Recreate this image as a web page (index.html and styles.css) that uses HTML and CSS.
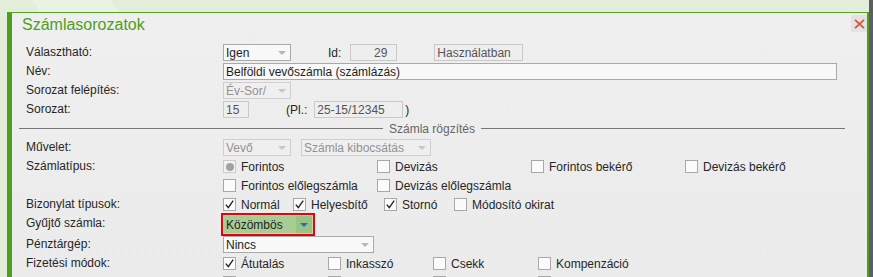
FILE: index.html
```html
<!DOCTYPE html>
<html lang="hu">
<head>
<meta charset="utf-8">
<title>Számlasorozatok</title>
<link rel="stylesheet" href="styles.css">
</head>
<body>
<div class="screen">
  <div class="stage">
    <div class="dialog">
      <div class="head">
        <h1 class="title">Számlasorozatok</h1>
        <button class="close" type="button" aria-label="Bezárás">
          <svg width="11" height="10" viewBox="0 0 11 10"><path d="M1 0.8 L10 9.2 M10 0.8 L1 9.2" stroke="#e0502f" stroke-width="1.8" fill="none"/></svg>
        </button>
      </div>
      <div class="form">
        <div class="label">Választható:</div>
        <div class="ctrl">
          <span class="sel w68">Igen<i class="arr"></i></span>
          <span class="txt ml37">Id:</span>
          <span class="field ro num w47 ml9">29</span>
          <span class="field ro w89 ml37">Használatban</span>
        </div>

        <div class="label">Név:</div>
        <div class="ctrl"><span class="field edit w614">Belföldi vevőszámla (számlázás)</span></div>

        <div class="label">Sorozat felépítés:</div>
        <div class="ctrl"><span class="sel dis w68">Év-Sor/<i class="arr"></i></span></div>

        <div class="label">Sorozat:</div>
        <div class="ctrl">
          <span class="field ro w26">15</span>
          <span class="txt ml37">(Pl.:</span>
          <span class="field ro w89 ml7">25-15/12345</span>
          <span class="txt ml2">)</span>
        </div>

        <div class="sep"><span>Számla rögzítés</span></div>

        <div class="label">Művelet:</div>
        <div class="ctrl">
          <span class="sel dis w68">Vevő<i class="arr"></i></span>
          <span class="sel dis w130 ml10">Számla kibocsátás<i class="arr"></i></span>
        </div>

        <div class="label">Számlatípus:</div>
        <div class="ctrl cols154">
          <span class="opt"><span class="rb"><i></i></span>Forintos</span>
          <span class="opt"><span class="cb"></span>Devizás</span>
          <span class="opt"><span class="cb"></span>Forintos bekérő</span>
          <span class="opt"><span class="cb"></span>Devizás bekérő</span>
        </div>

        <div class="label"></div>
        <div class="ctrl cols154">
          <span class="opt"><span class="cb"></span>Forintos előlegszámla</span>
          <span class="opt"><span class="cb"></span>Devizás előlegszámla</span>
        </div>

        <div class="label">Bizonylat típusok:</div>
        <div class="ctrl">
          <span class="opt w70"><span class="cb"><svg viewBox="0 0 11 11"><polyline points="1.8,5.6 4.3,8.6 9.2,1.6"/></svg></span>Normál</span>
          <span class="opt w91"><span class="cb"><svg viewBox="0 0 11 11"><polyline points="1.8,5.6 4.3,8.6 9.2,1.6"/></svg></span>Helyesbítő</span>
          <span class="opt w70"><span class="cb"><svg viewBox="0 0 11 11"><polyline points="1.8,5.6 4.3,8.6 9.2,1.6"/></svg></span>Stornó</span>
          <span class="opt"><span class="cb"></span>Módosító okirat</span>
        </div>

        <div class="label">Gyűjtő számla:</div>
        <div class="ctrl">
          <span class="gsel">Közömbös<span class="gbtn"><i></i></span></span>
        </div>

        <div class="label">Pénztárgép:</div>
        <div class="ctrl"><span class="sel w151">Nincs<i class="arr"></i></span></div>

        <div class="label">Fizetési módok:</div>
        <div class="ctrl cols105">
          <span class="opt"><span class="cb"><svg viewBox="0 0 11 11"><polyline points="1.8,5.6 4.3,8.6 9.2,1.6"/></svg></span>Átutalás</span>
          <span class="opt"><span class="cb"></span>Inkasszó</span>
          <span class="opt"><span class="cb"></span>Csekk</span>
          <span class="opt"><span class="cb"></span>Kompenzáció</span>
        </div>

        <div class="label"></div>
        <div class="ctrl cols105">
          <span class="opt"><span class="cb"></span>Készpénz</span>
          <span class="opt"><span class="cb"></span>Kártyás</span>
          <span class="opt"><span class="cb"></span>Utalvány</span>
          <span class="opt"><span class="cb"></span>Utánvét</span>
        </div>
      </div>
    </div>
  </div>
  <div class="scrollbar"></div>
</div>
</body>
</html>
```

FILE: styles.css
```css
* { box-sizing: border-box; }
html, body { margin: 0; padding: 0; }
body {
  width: 873px;
  height: 277px;
  overflow: hidden;
  font-family: "Liberation Sans", Arial, sans-serif;
  font-size: 12px;
  color: #262626;
  background: linear-gradient(56deg, #e2eed9 181px, #e9f3e3 182px, #e9f3e3 246px, #e2eed9 247px);
}
.screen { display: flex; height: 277px; }
.stage { flex: 1; padding: 12px 0 0 7px; }
.scrollbar { width: 4px; background: #5e5e5e; }

.dialog {
  height: 100%;
  background: linear-gradient(#efefef, #ebebeb);
  border-left: 5px solid #4e9f1f;
  border-top: 1px solid #56a626;
  border-right: 2px solid #4e9f1f;
}
.head {
  display: flex;
  justify-content: space-between;
  align-items: flex-start;
  height: 30px;
  padding-left: 10px;
}
.title {
  margin: 3px 0 0;
  font-weight: normal;
  font-size: 16px;
  line-height: 18px;
  color: #4f9e1c;
}
.close {
  margin-top: 2px;
  width: 16px;
  height: 17px;
  padding: 0;
  border: 0;
  background: #e2e2e2;
  display: flex;
  align-items: center;
  justify-content: center;
}

.form {
  display: grid;
  grid-template-columns: 204px 1fr;
  grid-template-rows: repeat(9, 19px) 21px repeat(3, 19px);
  padding-left: 7px;
}
.label {
  padding-left: 7px;
  line-height: 19px;
  white-space: nowrap;
}
.ctrl {
  display: flex;
  align-items: center;
  white-space: nowrap;
}

.ml2 { margin-left: 2px; }
.ml7 { margin-left: 7px; }
.ml9 { margin-left: 9px; }
.ml10 { margin-left: 10px; }
.ml37 { margin-left: 37px; }
.w26 { width: 26px; }
.w47 { width: 47px; }
.w68 { width: 68px; }
.w89 { width: 89px; }
.w130 { width: 130px; }
.w151 { width: 151px; }
.w614 { width: 614px; }
.w70 { width: 70px; }
.w91 { width: 91px; }

.field, .sel {
  display: inline-flex;
  align-items: center;
  height: 17px;
  padding: 0 2px;
  border: 1px solid #a9a9a9;
  background: #f8f8f8;
  color: #1e1e1e;
  flex: none;
}
.field.ro {
  border-color: #c9c9c9;
  background: #eeeeee;
  color: #555;
}
.field.num { justify-content: flex-end; padding-right: 9px; }
.sel.dis {
  border-color: #cfcfcf;
  background: #efefef;
  color: #929292;
}
.arr {
  margin-left: auto;
  margin-right: 2px;
  width: 0;
  height: 0;
  border-left: 4px solid transparent;
  border-right: 4px solid transparent;
  border-top: 4px solid #b6b6b6;
}
.sel.dis .arr { border-top-color: #c8c8c8; }

.sep {
  grid-column: 1 / -1;
  display: flex;
  align-items: center;
  gap: 6px;
  margin-right: 22px;
  color: #666;
}
.sep::before, .sep::after {
  content: "";
  flex: 1;
  height: 1px;
  background: #777;
}

.cols154 { display: grid; grid-template-columns: repeat(4, 154px); }
.cols105 { display: grid; grid-template-columns: repeat(4, 105px); }
.opt {
  display: inline-flex;
  align-items: center;
  flex: none;
}
.cb, .rb {
  width: 13px;
  height: 13px;
  margin-right: 5px;
  border: 1px solid #a8a8a8;
  background: #fbfbfb;
  flex: none;
  display: flex;
  align-items: center;
  justify-content: center;
}
.cb svg { width: 11px; height: 11px; }
.cb polyline { fill: none; stroke: #1d1d1d; stroke-width: 1.3; }
.rb { border-color: #cbcbcb; background: #f2f2f2; }
.rb i {
  width: 8px;
  height: 8px;
  border-radius: 50%;
  background: #a2a2a2;
}

.gsel {
  display: inline-flex;
  align-items: center;
  width: 90px;
  height: 19px;
  padding-left: 2px;
  border: 1px solid #bfdcae;
  background: #a6ce94;
  color: #1f1f1f;
  outline: 2px solid #e8000b;
}
.gbtn {
  margin-left: auto;
  width: 16px;
  height: 100%;
  background: #97c384;
  display: flex;
  align-items: center;
  justify-content: center;
}
.gbtn i {
  width: 0;
  height: 0;
  border-left: 4px solid transparent;
  border-right: 4px solid transparent;
  border-top: 4px solid #2e6bb3;
}
```
